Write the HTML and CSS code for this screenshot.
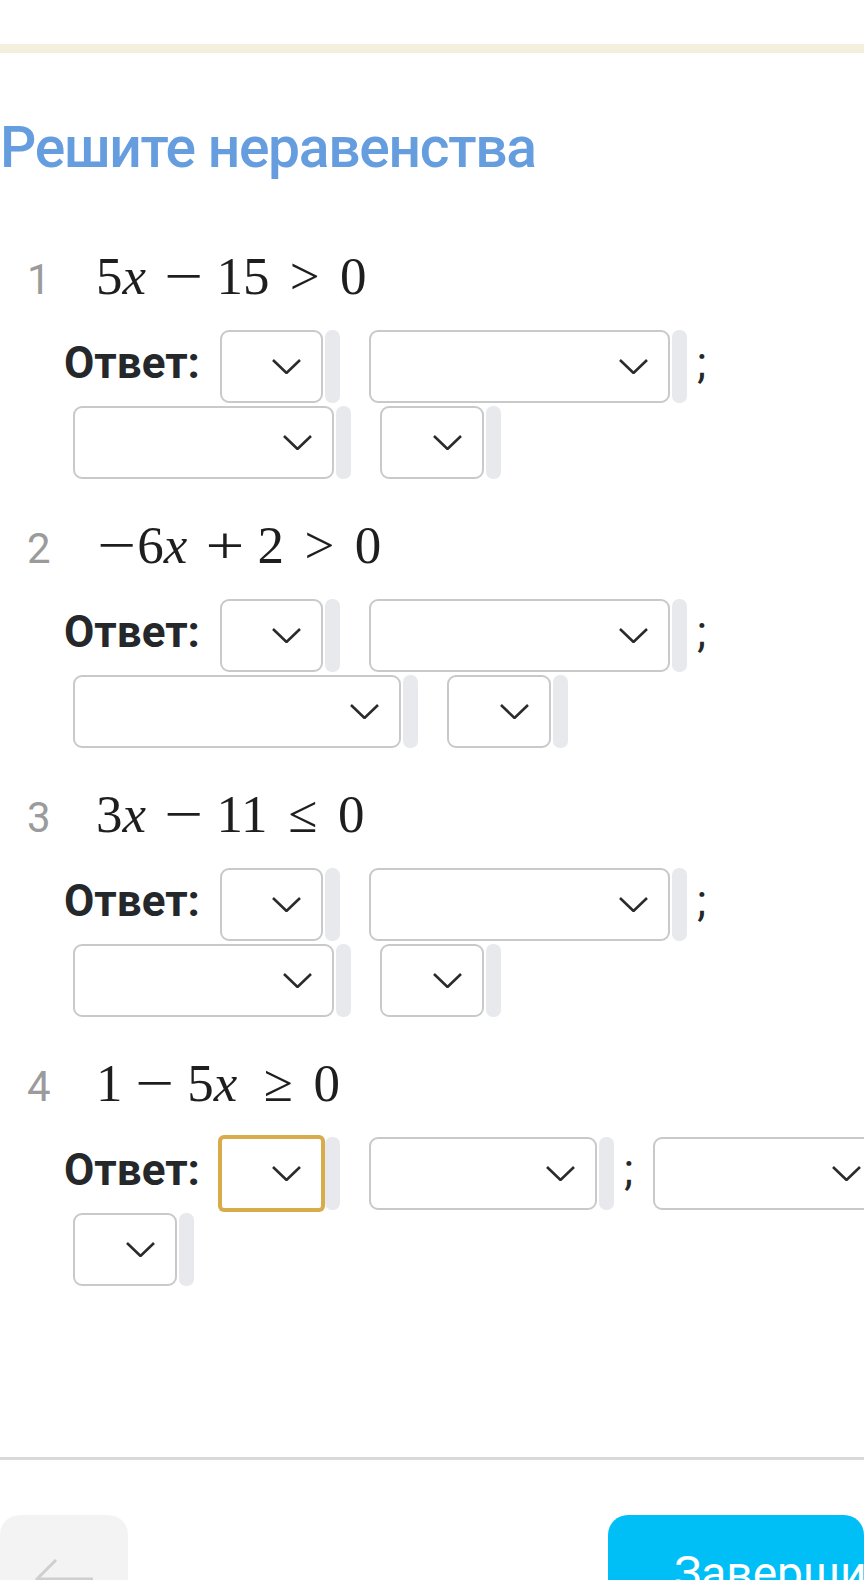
FILE: index.html
```html
<!DOCTYPE html>
<html>
  <head>
    <meta charset="utf-8" />
    <title>Решите неравенства</title>
    <link rel="stylesheet" href="styles.css">
  </head>

  <body>
    <div class="topbar"></div>

    <div id="main">
      <h1 class="title">Решите неравенства</h1>

      <!-- 1 -->
      <div class="task">
        <div class="eq-line">
          <span class="num">1</span><span class="eq">5<span class="var">x</span><span class="bin"><i>−</i></span>15<span class="rel">&gt;</span>0</span>
        </div>
        <div class="answer">
          <span class="label">Ответ:</span>
          <span class="slot"><span class="sel" style="width: 103px"><svg class="chev" width="29" height="15" viewBox="0 0 29 15"><polyline points="1,1 14.5,14 28,1" /></svg></span><span class="bar"></span></span>
          <span class="pair"><span class="slot"><span class="sel" style="width: 301px"><svg class="chev" width="29" height="15" viewBox="0 0 29 15"><polyline points="1,1 14.5,14 28,1" /></svg></span><span class="bar"></span></span><span class="semi">;</span></span>
          <span class="slot"><span class="sel" style="width: 261px"><svg class="chev" width="29" height="15" viewBox="0 0 29 15"><polyline points="1,1 14.5,14 28,1" /></svg></span><span class="bar"></span></span>
          <span class="slot"><span class="sel" style="width: 104px"><svg class="chev" width="29" height="15" viewBox="0 0 29 15"><polyline points="1,1 14.5,14 28,1" /></svg></span><span class="bar"></span></span>
        </div>
      </div>

      <!-- 2 -->
      <div class="task">
        <div class="eq-line">
          <span class="num">2</span><span class="eq"><span class="neg"><i>−</i></span>6<span class="var">x</span><span class="bin"><i>+</i></span>2<span class="rel">&gt;</span>0</span>
        </div>
        <div class="answer">
          <span class="label">Ответ:</span>
          <span class="slot"><span class="sel" style="width: 103px"><svg class="chev" width="29" height="15" viewBox="0 0 29 15"><polyline points="1,1 14.5,14 28,1" /></svg></span><span class="bar"></span></span>
          <span class="pair"><span class="slot"><span class="sel" style="width: 301px"><svg class="chev" width="29" height="15" viewBox="0 0 29 15"><polyline points="1,1 14.5,14 28,1" /></svg></span><span class="bar"></span></span><span class="semi">;</span></span>
          <span class="slot"><span class="sel" style="width: 328px"><svg class="chev" width="29" height="15" viewBox="0 0 29 15"><polyline points="1,1 14.5,14 28,1" /></svg></span><span class="bar"></span></span>
          <span class="slot"><span class="sel" style="width: 104px"><svg class="chev" width="29" height="15" viewBox="0 0 29 15"><polyline points="1,1 14.5,14 28,1" /></svg></span><span class="bar"></span></span>
        </div>
      </div>

      <!-- 3 -->
      <div class="task">
        <div class="eq-line">
          <span class="num">3</span><span class="eq">3<span class="var">x</span><span class="bin"><i>−</i></span>11<span class="rel">≤</span>0</span>
        </div>
        <div class="answer">
          <span class="label">Ответ:</span>
          <span class="slot"><span class="sel" style="width: 103px"><svg class="chev" width="29" height="15" viewBox="0 0 29 15"><polyline points="1,1 14.5,14 28,1" /></svg></span><span class="bar"></span></span>
          <span class="pair"><span class="slot"><span class="sel" style="width: 301px"><svg class="chev" width="29" height="15" viewBox="0 0 29 15"><polyline points="1,1 14.5,14 28,1" /></svg></span><span class="bar"></span></span><span class="semi">;</span></span>
          <span class="slot"><span class="sel" style="width: 261px"><svg class="chev" width="29" height="15" viewBox="0 0 29 15"><polyline points="1,1 14.5,14 28,1" /></svg></span><span class="bar"></span></span>
          <span class="slot"><span class="sel" style="width: 104px"><svg class="chev" width="29" height="15" viewBox="0 0 29 15"><polyline points="1,1 14.5,14 28,1" /></svg></span><span class="bar"></span></span>
        </div>
      </div>

      <!-- 4 -->
      <div class="task">
        <div class="eq-line">
          <span class="num">4</span><span class="eq">1<span class="bin"><i>−</i></span>5<span class="var">x</span><span class="rel">≥</span>0</span>
        </div>
        <div class="answer">
          <span class="label">Ответ:</span>
          <span class="slot"><span class="sel focus" style="width: 103px"><svg class="chev" width="29" height="15" viewBox="0 0 29 15"><polyline points="1,1 14.5,14 28,1" /></svg></span><span class="bar"></span></span>
          <span class="pair"><span class="slot"><span class="sel" style="width: 228px"><svg class="chev" width="29" height="15" viewBox="0 0 29 15"><polyline points="1,1 14.5,14 28,1" /></svg></span><span class="bar"></span></span><span class="semi">;</span></span>
          <span class="slot"><span class="sel" style="width: 230px"><svg class="chev" width="29" height="15" viewBox="0 0 29 15"><polyline points="1,1 14.5,14 28,1" /></svg></span><span class="bar"></span></span>
          <span class="slot"><span class="sel" style="width: 104px"><svg class="chev" width="29" height="15" viewBox="0 0 29 15"><polyline points="1,1 14.5,14 28,1" /></svg></span><span class="bar"></span></span>
        </div>
      </div>
    </div>

    <div class="footer">
      <button class="back">
        <svg width="60" height="40" viewBox="0 0 60 40"><polyline points="22,1 3,20 22,39" /><line x1="3" y1="20" x2="59" y2="20" /></svg>
      </button>
      <button class="finish">Завершить</button>
    </div>
  </body>
</html>
```

FILE: styles.css
```css
html,
body {
  margin: 0;
  padding: 0;
  background: #fff;
  overflow: hidden;
}
body {
  width: 864px;
  height: 1580px;
  font-family: Roboto, "Noto Sans", sans-serif;
  color: #25282b;
}

.topbar {
  margin-top: 44px;
  height: 9px;
  background: #f3efdc;
}

#main {
  width: 1000px;
}

.title {
  margin: 60px 0 67px 0;
  font-size: 57px;
  line-height: 70px;
  font-weight: 500;
  letter-spacing: -1.3px;
  color: #659ddf;
  white-space: nowrap;
}

.task {
  margin-bottom: 40px;
}

.eq-line {
  height: 53px;
  line-height: 53px;
  white-space: nowrap;
}
.num {
  display: inline-block;
  width: 69px;
  padding-left: 27px;
  font-family: Roboto, sans-serif;
  font-size: 42px;
  line-height: 1;
  color: #9b9b9b;
}
.eq {
  font-family: "Liberation Serif", "DejaVu Serif", serif;
  font-size: 53px;
  color: #1e1e1e;
}
.var {
  display: inline-block;
  width: 0.55em;
  font-style: italic;
}
.bin,
.rel,
.neg {
  display: inline-block;
  width: 0.778em;
  text-align: center;
}
.bin i,
.neg i {
  display: inline-block;
  font-style: normal;
  transform: scaleX(1.3);
}
.bin {
  margin: 0 0.222em;
}
.rel {
  margin: 0 0.278em;
}

.answer {
  display: flex;
  flex-wrap: wrap;
  align-items: center;
  row-gap: 3px;
  column-gap: 11px;
  width: 896px;
  margin-top: 27px;
  margin-left: 64px;
}
.label {
  font-size: 44px;
  font-weight: 700;
  line-height: 52px;
  margin-bottom: 8px;
}
.pair {
  display: flex;
  align-items: center;
}
.semi {
  font-size: 44px;
  line-height: 52px;
  margin-bottom: 8px;
  margin-left: 1px;
}
.slot {
  display: flex;
  margin: 0 9px;
}
.sel {
  box-sizing: border-box;
  display: flex;
  align-items: center;
  justify-content: flex-end;
  height: 73px;
  padding-right: 20px;
  border: 2px solid #c9c9c9;
  border-radius: 9px;
  background: #fff;
}
.sel.focus {
  border-color: #d8ab4b;
  border-radius: 4px;
  box-shadow: 0 0 0 2px #d8ab4b;
}
.chev polyline {
  fill: none;
  stroke: #2b2b2b;
  stroke-width: 2.6;
}
.bar {
  width: 15px;
  height: 73px;
  margin-left: 2px;
  border-radius: 7px;
  background: #e7e9ec;
}

.footer {
  position: absolute;
  left: 0;
  top: 1457px;
  width: 864px;
  border-top: 3px solid #d9d9d9;
  display: flex;
  justify-content: space-between;
  padding-top: 55px;
}
.footer button {
  border: none;
  height: 128px;
  border-radius: 20px;
  font-family: Roboto, sans-serif;
}
.back {
  width: 128px;
  background: #f3f3f3;
  display: flex;
  align-items: center;
  justify-content: center;
}
.back svg {
  stroke: #cfcfcf;
  stroke-width: 3;
  fill: none;
}
.finish {
  width: 256px;
  background: #00bff7;
  color: #fff;
  font-size: 46px;
  text-align: left;
  padding: 0 0 12px 66px;
  white-space: nowrap;
}
```
